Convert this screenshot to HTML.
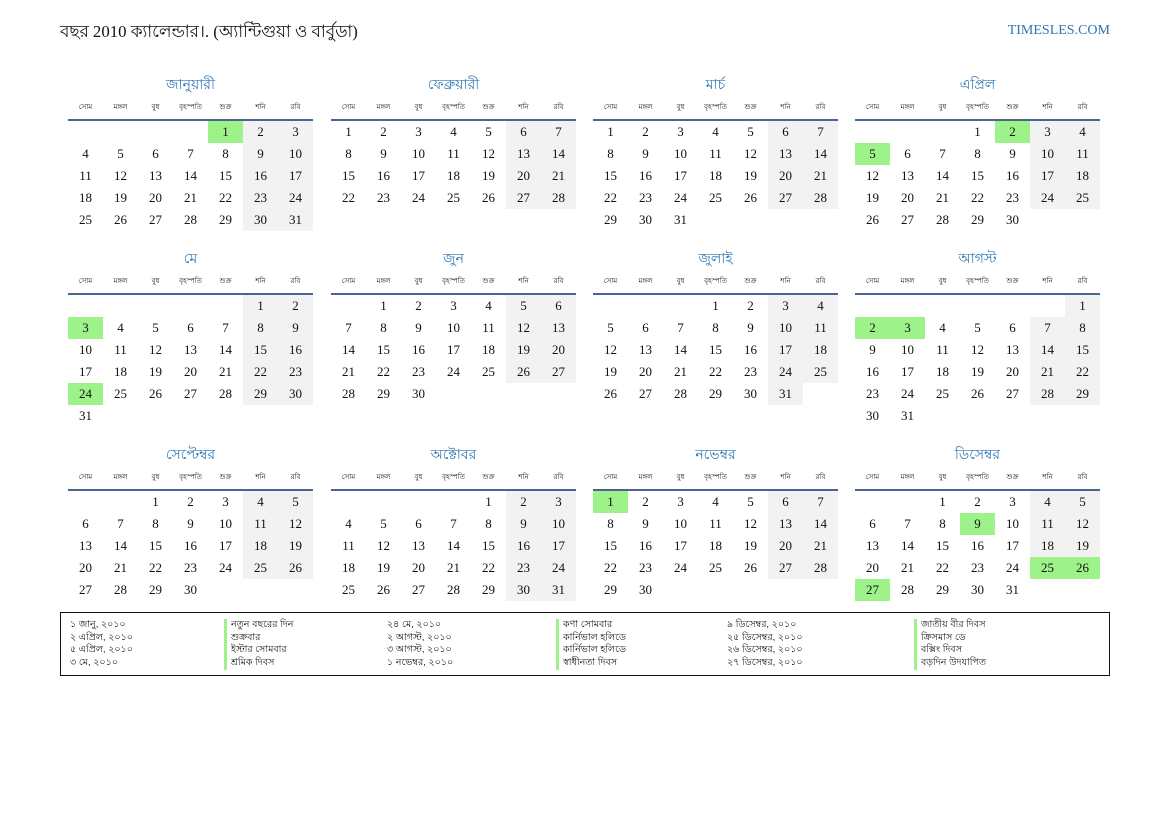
<!DOCTYPE html>
<html><head><meta charset="utf-8">
<style>
*{margin:0;padding:0;box-sizing:border-box}
body{width:1169px;height:827px;background:#fff;position:relative;font-family:"Liberation Serif",serif;color:#111;overflow:hidden}
.hd{position:absolute;left:60px;top:21px;font-size:16.8px;line-height:22px}
.site{position:absolute;right:59px;top:23px;font-size:14px;color:#2e75b6}
.m{position:absolute;width:245px}
.t{height:18px;line-height:18px;text-align:center;color:#2e75b6;font-size:14px;font-family:"Liberation Sans",sans-serif}
table{border-collapse:collapse;width:245px;table-layout:fixed}
th{height:27px;font-size:7px;font-weight:normal;vertical-align:bottom;padding-bottom:6px;border-bottom:2px solid #4a6590;font-family:"Liberation Sans",sans-serif}
td{height:22px;width:35px;text-align:center;font-size:13px;line-height:22px}
td.w{background:#f2f2f2}
td.h{background:#9df28a}
.lg{position:absolute;left:60px;top:612px;width:1050px;height:64px;border:1.5px solid #111}
.lg div{position:absolute;font-size:9.5px;line-height:12.7px;font-family:"Liberation Sans",sans-serif}
.b{border-left:3px solid #9df28a;padding-left:4px}
</style></head><body>
<div class="hd">বছর 2010 ক্যালেন্ডার।. (অ্যান্টিগুয়া ও বার্বুডা)</div>
<div class="site">TIMESLES.COM</div>

<div class="m" style="left:68px;top:75px"><div class="t">জানুয়ারী</div><table><tr><th>সোম</th><th>মঙ্গল</th><th>বুধ</th><th>বৃহস্পতি</th><th>শুক্র</th><th>শনি</th><th>রবি</th></tr>
<tr><td></td><td></td><td></td><td></td><td class="h">1</td><td class="w">2</td><td class="w">3</td></tr>
<tr><td>4</td><td>5</td><td>6</td><td>7</td><td>8</td><td class="w">9</td><td class="w">10</td></tr>
<tr><td>11</td><td>12</td><td>13</td><td>14</td><td>15</td><td class="w">16</td><td class="w">17</td></tr>
<tr><td>18</td><td>19</td><td>20</td><td>21</td><td>22</td><td class="w">23</td><td class="w">24</td></tr>
<tr><td>25</td><td>26</td><td>27</td><td>28</td><td>29</td><td class="w">30</td><td class="w">31</td></tr></table></div>

<div class="m" style="left:331px;top:75px"><div class="t">ফেব্রুয়ারী</div><table><tr><th>সোম</th><th>মঙ্গল</th><th>বুধ</th><th>বৃহস্পতি</th><th>শুক্র</th><th>শনি</th><th>রবি</th></tr>
<tr><td>1</td><td>2</td><td>3</td><td>4</td><td>5</td><td class="w">6</td><td class="w">7</td></tr>
<tr><td>8</td><td>9</td><td>10</td><td>11</td><td>12</td><td class="w">13</td><td class="w">14</td></tr>
<tr><td>15</td><td>16</td><td>17</td><td>18</td><td>19</td><td class="w">20</td><td class="w">21</td></tr>
<tr><td>22</td><td>23</td><td>24</td><td>25</td><td>26</td><td class="w">27</td><td class="w">28</td></tr></table></div>

<div class="m" style="left:593px;top:75px"><div class="t">মার্চ</div><table><tr><th>সোম</th><th>মঙ্গল</th><th>বুধ</th><th>বৃহস্পতি</th><th>শুক্র</th><th>শনি</th><th>রবি</th></tr>
<tr><td>1</td><td>2</td><td>3</td><td>4</td><td>5</td><td class="w">6</td><td class="w">7</td></tr>
<tr><td>8</td><td>9</td><td>10</td><td>11</td><td>12</td><td class="w">13</td><td class="w">14</td></tr>
<tr><td>15</td><td>16</td><td>17</td><td>18</td><td>19</td><td class="w">20</td><td class="w">21</td></tr>
<tr><td>22</td><td>23</td><td>24</td><td>25</td><td>26</td><td class="w">27</td><td class="w">28</td></tr>
<tr><td>29</td><td>30</td><td>31</td><td></td><td></td><td></td><td></td></tr></table></div>

<div class="m" style="left:855px;top:75px"><div class="t">এপ্রিল</div><table><tr><th>সোম</th><th>মঙ্গল</th><th>বুধ</th><th>বৃহস্পতি</th><th>শুক্র</th><th>শনি</th><th>রবি</th></tr>
<tr><td></td><td></td><td></td><td>1</td><td class="h">2</td><td class="w">3</td><td class="w">4</td></tr>
<tr><td class="h">5</td><td>6</td><td>7</td><td>8</td><td>9</td><td class="w">10</td><td class="w">11</td></tr>
<tr><td>12</td><td>13</td><td>14</td><td>15</td><td>16</td><td class="w">17</td><td class="w">18</td></tr>
<tr><td>19</td><td>20</td><td>21</td><td>22</td><td>23</td><td class="w">24</td><td class="w">25</td></tr>
<tr><td>26</td><td>27</td><td>28</td><td>29</td><td>30</td><td></td><td></td></tr></table></div>

<div class="m" style="left:68px;top:249px"><div class="t">মে</div><table><tr><th>সোম</th><th>মঙ্গল</th><th>বুধ</th><th>বৃহস্পতি</th><th>শুক্র</th><th>শনি</th><th>রবি</th></tr>
<tr><td></td><td></td><td></td><td></td><td></td><td class="w">1</td><td class="w">2</td></tr>
<tr><td class="h">3</td><td>4</td><td>5</td><td>6</td><td>7</td><td class="w">8</td><td class="w">9</td></tr>
<tr><td>10</td><td>11</td><td>12</td><td>13</td><td>14</td><td class="w">15</td><td class="w">16</td></tr>
<tr><td>17</td><td>18</td><td>19</td><td>20</td><td>21</td><td class="w">22</td><td class="w">23</td></tr>
<tr><td class="h">24</td><td>25</td><td>26</td><td>27</td><td>28</td><td class="w">29</td><td class="w">30</td></tr>
<tr><td>31</td><td></td><td></td><td></td><td></td><td></td><td></td></tr></table></div>

<div class="m" style="left:331px;top:249px"><div class="t">জুন</div><table><tr><th>সোম</th><th>মঙ্গল</th><th>বুধ</th><th>বৃহস্পতি</th><th>শুক্র</th><th>শনি</th><th>রবি</th></tr>
<tr><td></td><td>1</td><td>2</td><td>3</td><td>4</td><td class="w">5</td><td class="w">6</td></tr>
<tr><td>7</td><td>8</td><td>9</td><td>10</td><td>11</td><td class="w">12</td><td class="w">13</td></tr>
<tr><td>14</td><td>15</td><td>16</td><td>17</td><td>18</td><td class="w">19</td><td class="w">20</td></tr>
<tr><td>21</td><td>22</td><td>23</td><td>24</td><td>25</td><td class="w">26</td><td class="w">27</td></tr>
<tr><td>28</td><td>29</td><td>30</td><td></td><td></td><td></td><td></td></tr></table></div>

<div class="m" style="left:593px;top:249px"><div class="t">জুলাই</div><table><tr><th>সোম</th><th>মঙ্গল</th><th>বুধ</th><th>বৃহস্পতি</th><th>শুক্র</th><th>শনি</th><th>রবি</th></tr>
<tr><td></td><td></td><td></td><td>1</td><td>2</td><td class="w">3</td><td class="w">4</td></tr>
<tr><td>5</td><td>6</td><td>7</td><td>8</td><td>9</td><td class="w">10</td><td class="w">11</td></tr>
<tr><td>12</td><td>13</td><td>14</td><td>15</td><td>16</td><td class="w">17</td><td class="w">18</td></tr>
<tr><td>19</td><td>20</td><td>21</td><td>22</td><td>23</td><td class="w">24</td><td class="w">25</td></tr>
<tr><td>26</td><td>27</td><td>28</td><td>29</td><td>30</td><td class="w">31</td><td></td></tr></table></div>

<div class="m" style="left:855px;top:249px"><div class="t">আগস্ট</div><table><tr><th>সোম</th><th>মঙ্গল</th><th>বুধ</th><th>বৃহস্পতি</th><th>শুক্র</th><th>শনি</th><th>রবি</th></tr>
<tr><td></td><td></td><td></td><td></td><td></td><td></td><td class="w">1</td></tr>
<tr><td class="h">2</td><td class="h">3</td><td>4</td><td>5</td><td>6</td><td class="w">7</td><td class="w">8</td></tr>
<tr><td>9</td><td>10</td><td>11</td><td>12</td><td>13</td><td class="w">14</td><td class="w">15</td></tr>
<tr><td>16</td><td>17</td><td>18</td><td>19</td><td>20</td><td class="w">21</td><td class="w">22</td></tr>
<tr><td>23</td><td>24</td><td>25</td><td>26</td><td>27</td><td class="w">28</td><td class="w">29</td></tr>
<tr><td>30</td><td>31</td><td></td><td></td><td></td><td></td><td></td></tr></table></div>

<div class="m" style="left:68px;top:445px"><div class="t">সেপ্টেম্বর</div><table><tr><th>সোম</th><th>মঙ্গল</th><th>বুধ</th><th>বৃহস্পতি</th><th>শুক্র</th><th>শনি</th><th>রবি</th></tr>
<tr><td></td><td></td><td>1</td><td>2</td><td>3</td><td class="w">4</td><td class="w">5</td></tr>
<tr><td>6</td><td>7</td><td>8</td><td>9</td><td>10</td><td class="w">11</td><td class="w">12</td></tr>
<tr><td>13</td><td>14</td><td>15</td><td>16</td><td>17</td><td class="w">18</td><td class="w">19</td></tr>
<tr><td>20</td><td>21</td><td>22</td><td>23</td><td>24</td><td class="w">25</td><td class="w">26</td></tr>
<tr><td>27</td><td>28</td><td>29</td><td>30</td><td></td><td></td><td></td></tr></table></div>

<div class="m" style="left:331px;top:445px"><div class="t">অক্টোবর</div><table><tr><th>সোম</th><th>মঙ্গল</th><th>বুধ</th><th>বৃহস্পতি</th><th>শুক্র</th><th>শনি</th><th>রবি</th></tr>
<tr><td></td><td></td><td></td><td></td><td>1</td><td class="w">2</td><td class="w">3</td></tr>
<tr><td>4</td><td>5</td><td>6</td><td>7</td><td>8</td><td class="w">9</td><td class="w">10</td></tr>
<tr><td>11</td><td>12</td><td>13</td><td>14</td><td>15</td><td class="w">16</td><td class="w">17</td></tr>
<tr><td>18</td><td>19</td><td>20</td><td>21</td><td>22</td><td class="w">23</td><td class="w">24</td></tr>
<tr><td>25</td><td>26</td><td>27</td><td>28</td><td>29</td><td class="w">30</td><td class="w">31</td></tr></table></div>

<div class="m" style="left:593px;top:445px"><div class="t">নভেম্বর</div><table><tr><th>সোম</th><th>মঙ্গল</th><th>বুধ</th><th>বৃহস্পতি</th><th>শুক্র</th><th>শনি</th><th>রবি</th></tr>
<tr><td class="h">1</td><td>2</td><td>3</td><td>4</td><td>5</td><td class="w">6</td><td class="w">7</td></tr>
<tr><td>8</td><td>9</td><td>10</td><td>11</td><td>12</td><td class="w">13</td><td class="w">14</td></tr>
<tr><td>15</td><td>16</td><td>17</td><td>18</td><td>19</td><td class="w">20</td><td class="w">21</td></tr>
<tr><td>22</td><td>23</td><td>24</td><td>25</td><td>26</td><td class="w">27</td><td class="w">28</td></tr>
<tr><td>29</td><td>30</td><td></td><td></td><td></td><td></td><td></td></tr></table></div>

<div class="m" style="left:855px;top:445px"><div class="t">ডিসেম্বর</div><table><tr><th>সোম</th><th>মঙ্গল</th><th>বুধ</th><th>বৃহস্পতি</th><th>শুক্র</th><th>শনি</th><th>রবি</th></tr>
<tr><td></td><td></td><td>1</td><td>2</td><td>3</td><td class="w">4</td><td class="w">5</td></tr>
<tr><td>6</td><td>7</td><td>8</td><td class="h">9</td><td>10</td><td class="w">11</td><td class="w">12</td></tr>
<tr><td>13</td><td>14</td><td>15</td><td>16</td><td>17</td><td class="w">18</td><td class="w">19</td></tr>
<tr><td>20</td><td>21</td><td>22</td><td>23</td><td>24</td><td class="h">25</td><td class="h">26</td></tr>
<tr><td class="h">27</td><td>28</td><td>29</td><td>30</td><td>31</td><td></td><td></td></tr></table></div>

<div class="lg">
<div style="left:9px;top:6px">১ জানু, ২০১০<br>২ এপ্রিল, ২০১০<br>৫ এপ্রিল, ২০১০<br>৩ মে, ২০১০</div>
<div class="b" style="left:163px;top:6px">নতুন বছরের দিন<br>শুক্রবার<br>ইস্টার সোমবার<br>শ্রমিক দিবস</div>
<div style="left:326px;top:6px">২৪ মে, ২০১০<br>২ আগস্ট, ২০১০<br>৩ আগস্ট, ২০১০<br>১ নভেম্বর, ২০১০</div>
<div class="b" style="left:495px;top:6px">কণা সোমবার<br>কার্নিভাল হলিডে<br>কার্নিভাল হলিডে<br>স্বাধীনতা দিবস</div>
<div style="left:666px;top:6px">৯ ডিসেম্বর, ২০১০<br>২৫ ডিসেম্বর, ২০১০<br>২৬ ডিসেম্বর, ২০১০<br>২৭ ডিসেম্বর, ২০১০</div>
<div class="b" style="left:853px;top:6px">জাতীয় বীর দিবস<br>ক্রিসমাস ডে<br>বক্সিং দিবস<br>বড়দিন উদযাপিত</div>
</div>
</body></html>
